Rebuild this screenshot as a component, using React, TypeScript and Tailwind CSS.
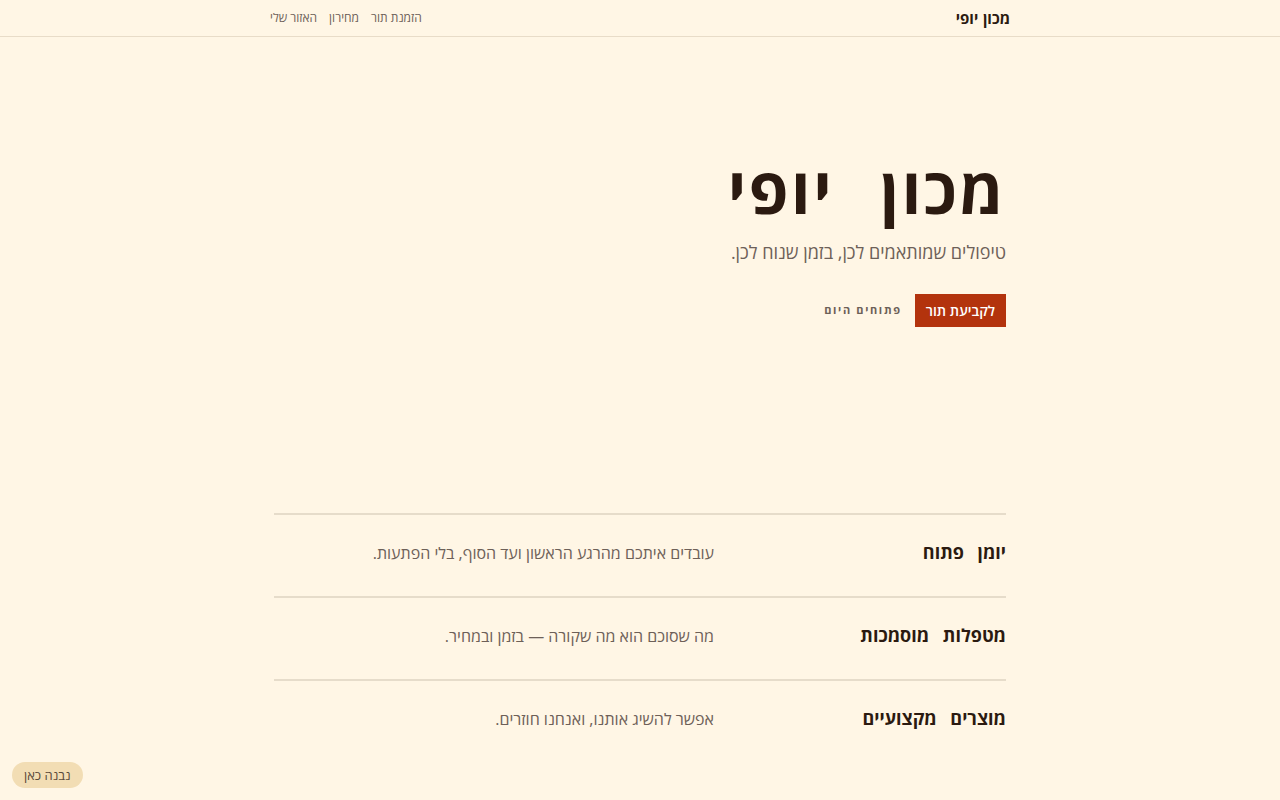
export default function App() {
  const features = [
    { title: "יומן פתוח", text: "עובדים איתכם מהרגע הראשון ועד הסוף, בלי הפתעות." },
    { title: "מטפלות מוסמכות", text: "מה שסוכם הוא מה שקורה — בזמן ובמחיר." },
    { title: "מוצרים מקצועיים", text: "אפשר להשיג אותנו, ואנחנו חוזרים." },
  ];

  return (
    <div dir="rtl" className="min-h-screen bg-[#fff6e5] text-[#2b1a10]" style={{ fontFamily: '"Open Sans", "DejaVu Sans", sans-serif' }}>
      {/* Header */}
      <header className="border-b border-[#e8dcc8]">
        <div className="mx-auto flex h-9 w-[740px] items-center justify-between">
          <div className="text-[15px] font-bold [word-spacing:0.05em]">מכון יופי</div>
          <nav className="flex gap-3 text-xs text-[#6d6058]">
            <a>הזמנת תור</a>
            <a>מחירון</a>
            <a>האזור שלי</a>
          </nav>
        </div>
      </header>

      <main className="mx-auto w-[732px]">
        {/* Hero */}
        <section className="pt-[113px] pb-[186px]">
          <h1 className="h-[79px] text-[64px] leading-[79px] font-bold tracking-[0.04em] [word-spacing:0.42em]">מכון יופי</h1>
          <p className="mt-[9px] text-lg text-[#6d6058]">טיפולים שמותאמים לכן, בזמן שנוח לכן.</p>
          <div className="mt-[28px] flex items-center gap-[13px]">
            <button className="h-[33px] bg-[#b3330d] px-[11px] text-sm font-semibold text-white">לקביעת תור</button>
            <span className="text-[11px] font-bold tracking-[0.15em] text-[#6d6058]">פתוחים היום</span>
          </div>
        </section>

        {/* Features */}
        <section>
          {features.map((f, i) => (
            <div key={i} className="grid h-[83px] grid-cols-[292px_1fr] items-baseline content-center border-t-2 border-[#e6dcca] pb-2">
              <h3 className="text-lg font-bold [word-spacing:0.5em]">{f.title}</h3>
              <p className="text-base text-[#6d6058]">{f.text}</p>
            </div>
          ))}
        </section>
      </main>

      <div className="fixed bottom-3 left-3 rounded-full bg-[#f2ddb4] px-3 py-1 text-[13px] leading-[18px] text-[#5a4a3a]">נבנה כאן</div>
    </div>
  );
}
